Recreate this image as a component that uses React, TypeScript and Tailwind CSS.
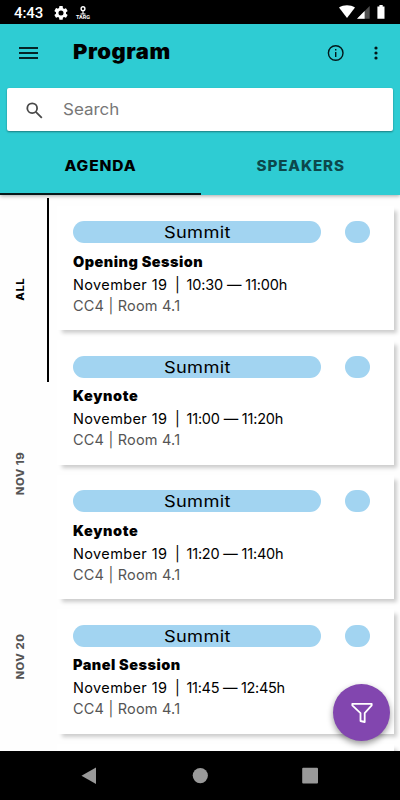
import React from "react";

const sessions = [
  { title: "Opening Session", time: "10:30 — 11:00h", titleTracking: "tracking-[0.48px]", timeTracking: "tracking-[-0.15px]" },
  { title: "Keynote", time: "11:00 — 11:20h", titleTracking: "tracking-[0.6px]", timeTracking: "tracking-[-0.2px]" },
  { title: "Keynote", time: "11:20 — 11:40h", titleTracking: "tracking-[0.6px]", timeTracking: "tracking-[-0.2px]" },
  { title: "Panel Session", time: "11:45 — 12:45h", titleTracking: "tracking-[0.48px]", timeTracking: "tracking-[-0.3px]" },
];

const cardClass =
  "h-[124.5px] shrink-0 bg-white pl-4 pt-[15.5px] shadow-[4px_4px_4px_-1px_rgba(0,0,0,0.2)]";

function StatusBar() {
  return (
    <div className="flex h-6 shrink-0 items-center bg-black text-white">
      <span className="ml-[14px] mt-[2px] w-[40px] font-[Roboto] text-[15px] font-medium leading-none tracking-[-0.1px]">4:43</span>
      <svg className="mt-[1px]" width="14" height="14" viewBox="2 2 20 20" fill="white">
        <path d="M19.14 12.94c.04-.3.06-.61.06-.94s-.02-.64-.07-.94l2.03-1.58a.49.49 0 0 0 .12-.61l-1.92-3.32a.49.49 0 0 0-.59-.22l-2.39.96a7 7 0 0 0-1.62-.94l-.36-2.54A.48.48 0 0 0 13.92 2h-3.84a.48.48 0 0 0-.47.41l-.36 2.54c-.59.24-1.13.57-1.62.94l-2.39-.96a.48.48 0 0 0-.59.22L2.74 8.87a.48.48 0 0 0 .12.61l2.03 1.58a7.1 7.1 0 0 0 0 1.88l-2.03 1.58a.49.49 0 0 0-.12.61l1.92 3.32c.12.22.37.29.59.22l2.39-.96c.5.38 1.03.7 1.62.94l.36 2.54c.05.24.24.41.48.41h3.84c.24 0 .44-.17.47-.41l.36-2.54a7 7 0 0 0 1.62-.94l2.39.96c.22.08.47 0 .59-.22l1.92-3.32a.48.48 0 0 0-.12-.61zM12 15.6a3.6 3.6 0 1 1 0-7.2 3.6 3.6 0 0 1 0 7.2z" />
      </svg>
      <div className="ml-[8px] mt-[1px] flex w-[14px] flex-col items-center">
        <svg width="8" height="9" viewBox="0 0 8 9" fill="none" stroke="white">
          <circle cx="4" cy="2.7" r="1.9" strokeWidth="1.4" />
          <path d="M4 4.5v3M1.5 8h5" strokeWidth="1.1" />
        </svg>
        <span className="font-[Roboto] text-[5.5px] font-bold leading-[5px]">TARG</span>
      </div>
      <svg className="ml-auto mr-[14px]" width="47" height="16" viewBox="0 0 47 16">
        <path d="M0 3.6C4.7.5 11.3.5 16 3.6L8 14z" fill="white" />
        <path d="M30.7 2v12.7H18z" fill="#505050" />
        <path d="M25.6 7v7.7H18z" fill="white" />
        <path d="M38.4 2.5h2V1h3.3v1.5h1.8v12.2h-7.1z" fill="white" />
      </svg>
    </div>
  );
}

function Header() {
  return (
    <header className="relative z-10 flex h-[171px] shrink-0 flex-col bg-[#2eccd3] shadow-[0_1px_4px_rgba(0,0,0,0.35)]">
      <div className="flex h-[64.4px] shrink-0 items-start">
        <svg className="ml-[19px] mt-[22px]" width="19" height="14" viewBox="0 0 19 14" fill="#052427">
          <path d="M0 1h19v2H0zM0 6h19v2H0zM0 11h19v2H0z" />
        </svg>
        <h1 className="ml-[35px] mt-[16px] origin-left scale-x-[1.07] whitespace-nowrap text-[20.5px] font-black leading-6 tracking-[0.5px]">Program</h1>
        <svg className="ml-auto mt-[20px]" width="18" height="18" viewBox="0 0 18 18">
          <circle cx="8.7" cy="9" r="7.3" fill="none" stroke="#031719" strokeWidth="1.4" />
          <path d="M8 8h1.4v5H8zM8 4.9h1.4v1.5H8z" fill="#031719" />
        </svg>
        <svg className="ml-[29px] mr-[22px] mt-[22px]" width="4" height="14" viewBox="0 0 4 14" fill="#031719">
          <circle cx="2" cy="2" r="1.6" /><circle cx="2" cy="7" r="1.6" /><circle cx="2" cy="12" r="1.6" />
        </svg>
      </div>
      <div className="mx-[7px] flex h-[43px] shrink-0 items-center rounded-[2px] bg-white shadow-[0_1px_2px_rgba(0,0,0,0.4)]">
        <svg className="ml-[19px] mt-[1px]" width="17" height="17" viewBox="0 0 17 17" fill="none" stroke="#484848" strokeWidth="1.8">
          <circle cx="6.2" cy="6.2" r="4.9" /><path d="m9.8 9.8 6 6" />
        </svg>
        <span className="ml-[20px] origin-left -translate-y-px scale-x-[1.06] text-[16px] leading-6 text-[#777]">Search</span>
      </div>
      <div className="flex flex-1 text-[14px] font-extrabold leading-5">
        <div className="flex w-[200.5px] justify-center border-b-2 border-[#07191a] pt-[25px]">
          <span className="scale-x-[1.11] tracking-[0.8px]">AGENDA</span>
        </div>
        <div className="flex flex-1 justify-center pt-[25px] text-[#0c484b]">
          <span className="scale-x-[1.085] tracking-[0.8px]">SPEAKERS</span>
        </div>
      </div>
    </header>
  );
}

function DayTab({ label, active }: { label: string; active?: boolean }) {
  return (
    <div className={`flex h-[183.5px] shrink-0 items-center justify-center border-r-2 pr-[7px] text-[10px] font-extrabold ${active ? "border-black text-black" : "border-transparent text-[#555]"}`}>
      <span className="rotate-180 scale-y-[1.12] whitespace-nowrap leading-3 tracking-[0.5px] [writing-mode:vertical-rl]">{label}</span>
    </div>
  );
}

export default function App() {
  return (
    <div className="relative flex h-[800px] w-[400px] flex-col overflow-hidden bg-white font-[Inter,sans-serif] text-black">
      <StatusBar />
      <Header />
      <main className="flex h-[556px] shrink-0 overflow-hidden bg-[#fefefe]">
        <nav className="flex w-[49px] shrink-0 flex-col pt-[3px]">
          <DayTab label="ALL" active />
          <DayTab label="NOV 19" />
          <DayTab label="NOV 20" />
        </nav>
        <section className="ml-2 flex w-[337px] shrink-0 flex-col gap-[10px] pt-[10.5px]">
          {sessions.map((s) => (
            <article key={s.time} className={cardClass}>
              <div className="flex h-[22px]">
                <div className="flex w-[248px] items-center justify-center rounded-full bg-[#a2d4f1] text-[16px]">
                  <span className="scale-x-[1.14] tracking-[0.3px]">Summit</span>
                </div>
                <div className="ml-6 w-[25px] rounded-[11px] bg-[#a2d4f1]" />
              </div>
              <div className="mt-[7.9px] text-[14.5px] leading-[22px]">
                <h2 className={`font-black ${s.titleTracking}`}>{s.title}</h2>
                <p className="flex whitespace-pre pt-px">
                  <span className="w-[94px] tracking-[0.38px]">November 19</span>
                  <span className="w-[19.5px] pl-[8px]">|</span>
                  <span className={s.timeTracking}>{s.time}</span>
                </p>
                <p className="-mt-px tracking-[0.2px] text-[#555]">CC4 | Room 4.1</p>
              </div>
            </article>
          ))}
          <article className={cardClass} />
        </section>
      </main>
      <footer className="flex h-[49px] shrink-0 items-center bg-black">
        <svg width="400" height="49" viewBox="0 0 400 49" fill="#999">
          <path d="M81.5 24.7 96 16.5v16.4z" /><circle cx="200.3" cy="24.6" r="7.6" />
          <rect x="302.2" y="16.8" width="15.8" height="15.8" rx="1" />
        </svg>
      </footer>
      <button aria-label="Filter sessions" className="absolute left-[333px] top-[684px] z-20 flex h-[57px] w-[57px] items-center justify-center rounded-full bg-[#8246af] shadow-[0_3px_6px_rgba(0,0,0,0.4)]">
        <svg width="24" height="22" viewBox="0 0 24 22" fill="none" stroke="white" strokeWidth="1.8" strokeLinejoin="round">
          <path d="M2.3 1.8h19.4v1.5l-7 7.8v8.9L10.5 19v-7.9L2.3 3.3z" />
        </svg>
      </button>
    </div>
  );
}
